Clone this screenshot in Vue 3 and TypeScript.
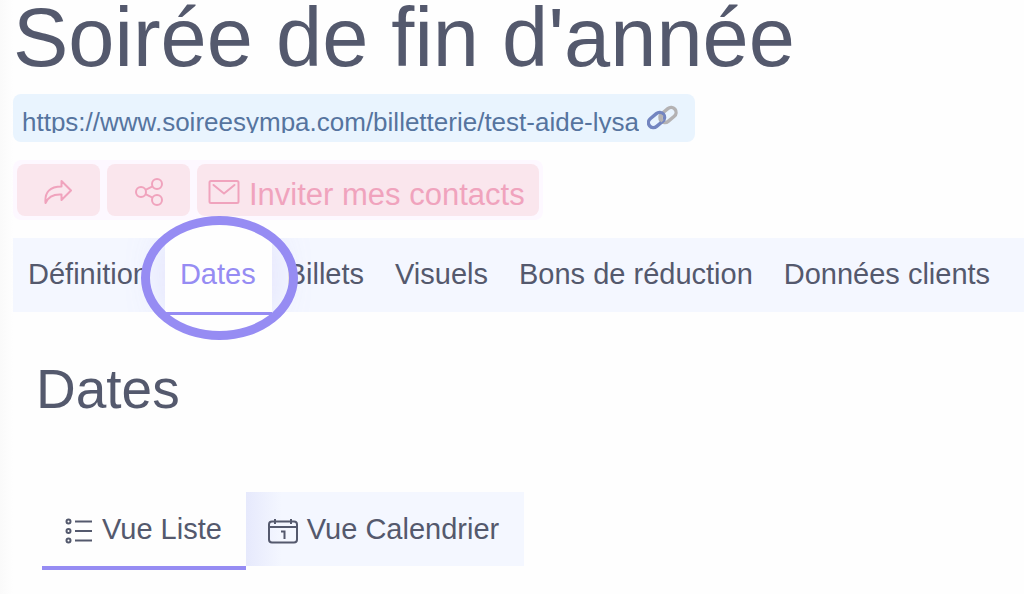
<script setup lang="ts">
import { ref } from 'vue'

interface Tab {
  id: string
  label: string
}

const title = "Soirée de fin d'année"
const url = 'https://www.soireesympa.com/billetterie/test-aide-lysa'

const tabs: Tab[] = [
  { id: 'definition', label: 'Définition' },
  { id: 'dates', label: 'Dates' },
  { id: 'billets', label: 'Billets' },
  { id: 'visuels', label: 'Visuels' },
  { id: 'reduction', label: 'Bons de réduction' },
  { id: 'clients', label: 'Données clients' },
]
const activeTab = ref('dates')
const view = ref<'list' | 'calendar'>('list')
</script>

<template>
  <main class="page">
    <h1 class="title">{{ title }}</h1>

    <div class="url-box">
      <a class="url" :href="url">{{ url }}</a>
      <svg class="link-icon" viewBox="0 0 32 26" fill="none" stroke-width="3.4" aria-hidden="true">
        <rect x="12" y="5" width="18" height="10" rx="5" stroke="#b4b2b3" transform="rotate(-40 21 10)" />
        <rect x="0.500" y="10" width="18" height="10" rx="5" stroke="#7385c0" transform="rotate(-40 9.500 15)" />
        <path d="M15.200 10c-1.600 2.200-1.600 4.500.4 6.200" stroke="#b4b2b3" />
      </svg>
    </div>

    <div class="actions">
      <button class="action icon-only" type="button" aria-label="Partager">
        <svg width="30" height="26" viewBox="0 0 30 26" fill="none" stroke="currentColor" stroke-width="2" stroke-linejoin="round" aria-hidden="true">
          <path d="M17.500 2 27 11.500 17.500 21V15.500C9.500 15 4.500 17 1.500 24 .5 13 6 7.500 17.500 7.500Z" />
        </svg>
      </button>
      <button class="action icon-only" type="button" aria-label="Réseaux sociaux">
        <svg width="30" height="30" viewBox="0 0 30 30" fill="none" stroke="currentColor" stroke-width="2" aria-hidden="true">
          <circle cx="7" cy="15" r="5" />
          <circle cx="23" cy="7" r="5" />
          <circle cx="23" cy="23" r="5" />
          <path d="M11.500 12.800 18.500 9.300M11.500 17.200 18.500 20.700" />
        </svg>
      </button>
      <button class="action invite" type="button">
        <svg width="32" height="26" viewBox="0 0 32 26" fill="none" stroke="currentColor" stroke-width="2" stroke-linejoin="round" stroke-linecap="round" aria-hidden="true">
          <rect x="1.500" y="2" width="29" height="22" rx="1.500" />
          <path d="M5.500 6 16 14.500 26.500 6" />
        </svg>
        <span>Inviter mes contacts</span>
      </button>
    </div>

    <nav class="tabs">
      <button
        v-for="tab in tabs"
        :key="tab.id"
        type="button"
        class="tab"
        :class="{ active: tab.id === activeTab }"
        @click="activeTab = tab.id"
      >
        {{ tab.label }}
        <span v-if="tab.id === activeTab" class="ring"></span>
      </button>
    </nav>

    <section class="content">
      <h2 class="heading">Dates</h2>
      <div class="views">
        <button type="button" class="view list" :class="{ selected: view === 'list' }" @click="view = 'list'">
          <svg width="28" height="26" viewBox="0 0 28 26" fill="none" stroke="currentColor" stroke-width="2" aria-hidden="true">
            <circle cx="3.500" cy="3.500" r="2" />
            <circle cx="3.500" cy="13" r="2" />
            <circle cx="3.500" cy="22.500" r="2" />
            <path d="M10 3.500h17M10 13h17M10 22.500h17" />
          </svg>
          <span>Vue Liste</span>
        </button>
        <button type="button" class="view calendar" :class="{ selected: view === 'calendar' }" @click="view = 'calendar'">
          <svg width="30" height="26" viewBox="0 0 30 26" fill="none" stroke="currentColor" stroke-width="2" aria-hidden="true">
            <rect x="1" y="3.500" width="28" height="21" rx="3" />
            <path d="M1 9h28M7 1v5M23 1v5M13 13.500h3.500V21" />
          </svg>
          <span>Vue Calendrier</span>
        </button>
      </div>
    </section>
  </main>
</template>

<style>
body {
  margin: 0;
  background: #fefefe;
  overflow-x: hidden;
}
</style>

<style scoped>
.page {
  min-height: 100vh;
  box-sizing: border-box;
  padding-left: 13px;
  color: #54596d;
  font-family: "Liberation Sans", Arial, sans-serif;
  background: linear-gradient(to right, #fafafa, #fefefe 13px);
}
button {
  margin: 0;
  border: 0;
  background: none;
  color: inherit;
  font: inherit;
  cursor: pointer;
}
svg {
  flex: none;
}
.title {
  margin: 0;
  font-size: 83px;
  line-height: 76px;
  font-weight: 400;
  white-space: nowrap;
}
.url-box {
  display: flex;
  align-items: center;
  gap: 8px;
  width: fit-content;
  height: 48px;
  margin-top: 18px;
  padding: 0 16px 0 9px;
  box-sizing: border-box;
  border-radius: 8px;
  background: #e9f4fe;
}
.url {
  height: 30px;
  overflow: hidden;
  color: #56749f;
  font-size: 26px;
  line-height: 38px;
  text-decoration: none;
  white-space: nowrap;
}
.link-icon {
  width: 32px;
  height: 26px;
}
.actions {
  display: flex;
  gap: 7px;
  width: fit-content;
  margin-top: 18px;
  padding: 4px;
  border-radius: 8px;
  background: #fdf8ff;
}
.action {
  display: flex;
  align-items: center;
  justify-content: center;
  gap: 9px;
  height: 52px;
  border-radius: 8px;
  background: #fae6ed;
  color: #f0a3bd;
}
.icon-only {
  width: 83px;
  padding: 3px 0 0;
}
.invite {
  padding: 0 14px 0 11px;
  font-size: 31px;
  line-height: 36px;
  white-space: nowrap;
}
.invite span {
  padding-top: 9px;
}
.invite svg {
  margin-top: 4px;
}
.tabs {
  display: flex;
  height: 74px;
  margin-top: 18px;
  background: #f4f7ff;
}
.tab {
  position: relative;
  flex: none;
  box-sizing: border-box;
  height: 74px;
  padding: 0 16px 2px 15px;
  font-size: 29px;
  line-height: 72px;
  white-space: nowrap;
}
.tab.active {
  z-index: 1;
  height: 77px;
  border-bottom: 3px solid #968cf3;
  background: #fefefe;
  color: #968cf3;
}
.tab.active::before {
  content: "";
  position: absolute;
  inset: 0;
  box-shadow: 0 0 40px rgba(150, 140, 243, 0.22);
  clip-path: inset(0 -50px);
}
.ring {
  position: absolute;
  top: -22px;
  right: -26px;
  bottom: -28px;
  left: -24px;
  border: 9px solid #968cf3;
  border-radius: 50%;
  pointer-events: none;
}
.content {
  padding: 45px 29px 24px;
}
.heading {
  margin: 0 0 71px -6px;
  font-size: 55px;
  line-height: 64px;
  font-weight: 400;
}
.views {
  display: flex;
  align-items: flex-start;
}
.view {
  display: flex;
  align-items: center;
  gap: 9px;
  box-sizing: border-box;
  height: 74px;
  padding: 0 25px 0 22px;
  background: #f4f7ff;
  font-size: 29px;
  line-height: 72px;
  white-space: nowrap;
}
.view.list {
  padding: 0 24px 0 23px;
}
.view svg {
  margin-top: 3px;
}
.view.selected {
  height: 78px;
  border-bottom: 4px solid #968cf3;
  background: #fefefe;
}
.selected + .calendar {
  background: linear-gradient(to right, #e6e9fc, #f4f7ff 36px);
}
</style>
